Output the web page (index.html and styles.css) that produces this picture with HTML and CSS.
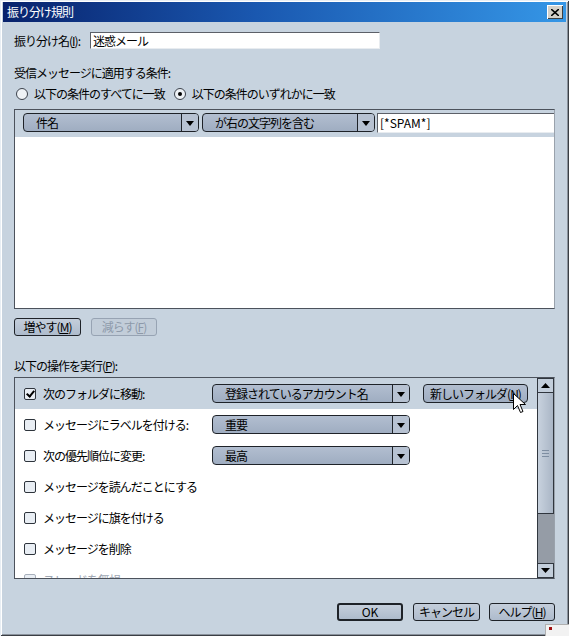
FILE: index.html
```html
<!DOCTYPE html>
<html lang="ja">
<head>
    <meta charset="UTF-8">
    <title>振り分け規則</title>
    <link rel="stylesheet" href="styles.css">
</head>
<body>
    <div class="window">
        <div class="titlebar">
            <span class="title">振り分け規則</span>
            <span class="close">
                <svg width="8" height="7" viewBox="0 0 8 7"><path d="M0 0 L8 7 M8 0 L0 7" stroke="#000" stroke-width="1.6"/></svg>
            </span>
        </div>
        <div class="content">
            <div class="name-row">
                <span class="name-label">振り分け名(<u>I</u>):</span>
                <div class="textbox name-box">迷惑メール</div>
            </div>
            <div class="label cond-label">受信メッセージに適用する条件:</div>
            <div class="radio-row">
                <span class="radio"><i class="radio-mark"></i>以下の条件のすべてに一致</span>
                <span class="radio on"><i class="radio-mark"></i>以下の条件のいずれかに一致</span>
            </div>
            <div class="cond-box">
                <div class="cond-row">
                    <div class="combo combo-field"><span class="combo-text">件名</span><span class="combo-arrow"></span></div>
                    <div class="combo combo-match"><span class="combo-text">が右の文字列を含む</span><span class="combo-arrow"></span></div>
                    <div class="textbox cond-text">[*SPAM*]</div>
                </div>
            </div>
            <div class="btn-row">
                <button class="btn">増やす(<u>M</u>)</button>
                <button class="btn disabled">減らす(<u>F</u>)</button>
            </div>
            <div class="label actions-label">以下の操作を実行(<u>P</u>):</div>
            <div class="actions-box">
                <div class="actions-list">
                    <div class="act-row selected">
                        <i class="check on"></i><span class="act-label">次のフォルダに移動:</span>
                        <div class="combo combo-act"><span class="combo-text">登録されているアカウント名</span><span class="combo-arrow"></span></div>
                        <button class="btn folder-btn">新しいフォルダ(<u>N</u>)</button>
                    </div>
                    <div class="act-row">
                        <i class="check"></i><span class="act-label">メッセージにラベルを付ける:</span>
                        <div class="combo combo-act"><span class="combo-text">重要</span><span class="combo-arrow"></span></div>
                    </div>
                    <div class="act-row">
                        <i class="check"></i><span class="act-label">次の優先順位に変更:</span>
                        <div class="combo combo-act"><span class="combo-text">最高</span><span class="combo-arrow"></span></div>
                    </div>
                    <div class="act-row">
                        <i class="check"></i><span class="act-label wide">メッセージを読んだことにする</span>
                    </div>
                    <div class="act-row">
                        <i class="check"></i><span class="act-label wide">メッセージに旗を付ける</span>
                    </div>
                    <div class="act-row">
                        <i class="check"></i><span class="act-label wide">メッセージを削除</span>
                    </div>
                    <div class="act-row dim">
                        <i class="check"></i><span class="act-label wide">スレッドを無視</span>
                    </div>
                    <svg class="cursor" width="13" height="21" viewBox="0 0 13 21">
                        <path d="M0.5 0.5 L0.5 16.5 L4.5 12.5 L7.5 19.5 L10 18.5 L7 11.5 L12.5 11.5 Z" fill="#fff" stroke="#000" stroke-width="1"/>
                    </svg>
                </div>
                <div class="scrollbar">
                    <div class="sb-btn"><svg width="9" height="5" viewBox="0 0 9 5"><path d="M0 5 L4.5 0 L9 5 Z" fill="#000"/></svg></div>
                    <div class="sb-thumb"><span class="grip"></span></div>
                    <div class="sb-track"></div>
                    <div class="sb-btn"><svg width="9" height="5" viewBox="0 0 9 5"><path d="M0 0 L4.5 5 L9 0 Z" fill="#000"/></svg></div>
                </div>
            </div>
            <div class="footer">
                <button class="btn default">OK</button>
                <button class="btn cancel">キャンセル</button>
                <button class="btn help">ヘルプ(<u>H</u>)</button>
            </div>
        </div>
        <div class="grip-corner"><i></i></div>
    </div>
</body>
</html>
```

FILE: styles.css
```css
body {
    margin: 0;
    background: #c7d3df;
    font-family: "Noto Sans CJK JP", sans-serif;
    font-size: 12px;
    letter-spacing: -1px;
    color: #000;
}
.window {
    position: relative;
    width: 569px;
    height: 636px;
    box-sizing: border-box;
    padding: 2px 3px 3px 3px;
    background: #c7d3df;
    box-shadow: inset 1px 1px 0 #e8eef4, inset -1px -1px 0 #3a3e44, inset 2px 2px 0 #ffffff, inset -2px -2px 0 #8a929c;
    overflow: hidden;
}
.titlebar {
    height: 20px;
    display: flex;
    align-items: center;
    justify-content: space-between;
    padding: 0 3px 0 3px;
    background: linear-gradient(to right, #08226c 0%, #1a58b0 45%, #3596e6 100%);
}
.title {
    color: #fff;
    font-size: 12px;
    line-height: 20px;
    padding-left: 1px;
}
.close {
    width: 16px;
    height: 14px;
    box-sizing: border-box;
    display: flex;
    align-items: center;
    justify-content: center;
    background: #d4d0c8;
    box-shadow: inset 1px 1px 0 #fff, inset -1px -1px 0 #404040;
}
.content {
    padding: 0 11px;
}
.name-row {
    display: flex;
    align-items: center;
    height: 17px;
    margin-top: 10px;
}
.name-label {
    width: 76px;
    line-height: 17px;
}
.textbox {
    background: #fff;
    box-sizing: border-box;
    border-top: 1px solid #5c6068;
    border-left: 1px solid #5c6068;
    border-bottom: 1px solid #e8ecf0;
    border-right: 1px solid #e8ecf0;
    padding-left: 2px;
    line-height: 15px;
}
.name-box {
    width: 290px;
    height: 17px;
}
.label {
    line-height: 14px;
    height: 14px;
}
.cond-label {
    margin-top: 17px;
}
.radio-row {
    display: flex;
    height: 14px;
    margin-top: 7px;
    padding-left: 2px;
}
.radio {
    display: flex;
    align-items: center;
    line-height: 14px;
}
.radio + .radio {
    margin-left: 9px;
}
.radio-mark {
    width: 12px;
    height: 12px;
    box-sizing: border-box;
    border-radius: 50%;
    border: 1px solid #3c424c;
    background: #eef2f6;
    margin-right: 6px;
    position: relative;
}
.radio.on .radio-mark::after {
    content: "";
    position: absolute;
    left: 3px;
    top: 3px;
    width: 4px;
    height: 4px;
    border-radius: 50%;
    background: #000;
}
.cond-box {
    margin-top: 8px;
    height: 200px;
    box-sizing: border-box;
    border: 1px solid #4c525c;
    border-right-color: #9aa2ac;
    background: #fff;
}
.cond-row {
    display: flex;
    gap: 3px;
    padding: 3px 0 4px 8px;
    background: #c7d3df;
}
.combo {
    display: flex;
    height: 19px;
    box-sizing: border-box;
    border: 1px solid #1e2228;
    border-radius: 4px;
    background: linear-gradient(#b2bed0, #9fadc1);
    overflow: hidden;
}
.combo-text {
    flex: 1;
    padding-left: 12px;
    line-height: 17px;
    white-space: nowrap;
}
.combo-arrow {
    width: 16px;
    border-left: 1px solid #1e2228;
    background: #b7c2d2;
    position: relative;
}
.combo-arrow::after {
    content: "";
    position: absolute;
    left: 4px;
    top: 7px;
    border-left: 4px solid transparent;
    border-right: 4px solid transparent;
    border-top: 5px solid #000;
}
.combo-field {
    width: 176px;
}
.combo-match {
    width: 173px;
}
.cond-text {
    flex: 1;
    height: 20px;
    margin-left: -1px;
    line-height: 18px;
    border-right: none;
    letter-spacing: 0;
}
.btn-row {
    display: flex;
    gap: 10px;
    margin-top: 9px;
}
.btn {
    height: 18px;
    box-sizing: border-box;
    border: 1px solid #1e2228;
    border-radius: 3px;
    background: linear-gradient(#c4cedb, #aebbcc);
    font-family: "Noto Sans CJK JP", sans-serif;
    font-size: 12px;
    letter-spacing: -1px;
    line-height: 16px;
    padding: 0;
    color: #000;
    width: 67px;
}
.btn.disabled {
    border-color: #97a3b3;
    color: #8d99a9;
    background: #c2cdd9;
    width: 66px;
}
.actions-label {
    margin-top: 23px;
}
.actions-box {
    display: flex;
    margin-top: 4px;
    height: 202px;
    box-sizing: border-box;
    border: 1px solid #4c525c;
    border-right-color: #9aa2ac;
    background: #fff;
}
.actions-list {
    flex: 1;
    position: relative;
    overflow: hidden;
}
.act-row {
    display: flex;
    align-items: center;
    height: 31px;
    padding-left: 9px;
}
.act-row.selected {
    background: #c7d3df;
}
.act-row.dim {
    color: #a0a8b4;
}
.check {
    width: 12px;
    height: 12px;
    box-sizing: border-box;
    border: 1px solid #2e343c;
    border-radius: 2px;
    background: #e9eef4;
    margin-right: 7px;
    position: relative;
}
.act-row.dim .check {
    border-color: #a8b0bc;
}
.check.on::after {
    content: "";
    position: absolute;
    left: 3px;
    top: 0px;
    width: 3px;
    height: 6px;
    border-right: 2px solid #000;
    border-bottom: 2px solid #000;
    transform: rotate(40deg);
}
.act-label {
    width: 169px;
    white-space: nowrap;
}
.act-label.wide {
    width: auto;
}
.combo-act {
    width: 198px;
}
.folder-btn {
    width: 105px;
    height: 19px;
    margin-left: 13px;
    border-radius: 4px;
    background: linear-gradient(#b2bed0, #9fadc1);
}
.cursor {
    position: absolute;
    left: 498px;
    top: 15px;
}
.scrollbar {
    width: 16px;
    display: flex;
    flex-direction: column;
    border-left: 1px solid #30363e;
}
.sb-btn {
    height: 15px;
    box-sizing: border-box;
    display: flex;
    align-items: center;
    justify-content: center;
    background: #c3cedb;
    border: 1px solid #30363e;
    border-left: none;
}
.sb-thumb {
    height: 121px;
    box-sizing: border-box;
    background: linear-gradient(to right, #c8d2de, #aab6c6);
    border: 1px solid #30363e;
    border-left: none;
    border-top: none;
    display: flex;
    align-items: center;
    justify-content: center;
}
.grip {
    width: 7px;
    height: 5px;
    border-top: 1px solid #7e8ea2;
    border-bottom: 1px solid #7e8ea2;
    position: relative;
}
.grip::after {
    content: "";
    position: absolute;
    left: 0;
    right: 0;
    top: 2px;
    border-top: 1px solid #7e8ea2;
}
.sb-track {
    flex: 1;
    background: #959ca6;
}
.footer {
    display: flex;
    justify-content: flex-end;
    gap: 10px;
    margin-top: 24px;
}
.btn.default {
    border-width: 2px;
    line-height: 14px;
    width: 66px;
    letter-spacing: 0;
}
.btn.help {
    width: 66px;
    margin-left: -1px;
}
.grip-corner {
    position: absolute;
    right: 0;
    bottom: 0;
    width: 23px;
    height: 11px;
    background: #f2f2f2;
    border-top: 1px solid #b0b0b0;
    border-left: 1px solid #b0b0b0;
}
.grip-corner i {
    position: absolute;
    left: 3px;
    top: 2px;
    width: 3px;
    height: 3px;
    background: #a01010;
}
```
